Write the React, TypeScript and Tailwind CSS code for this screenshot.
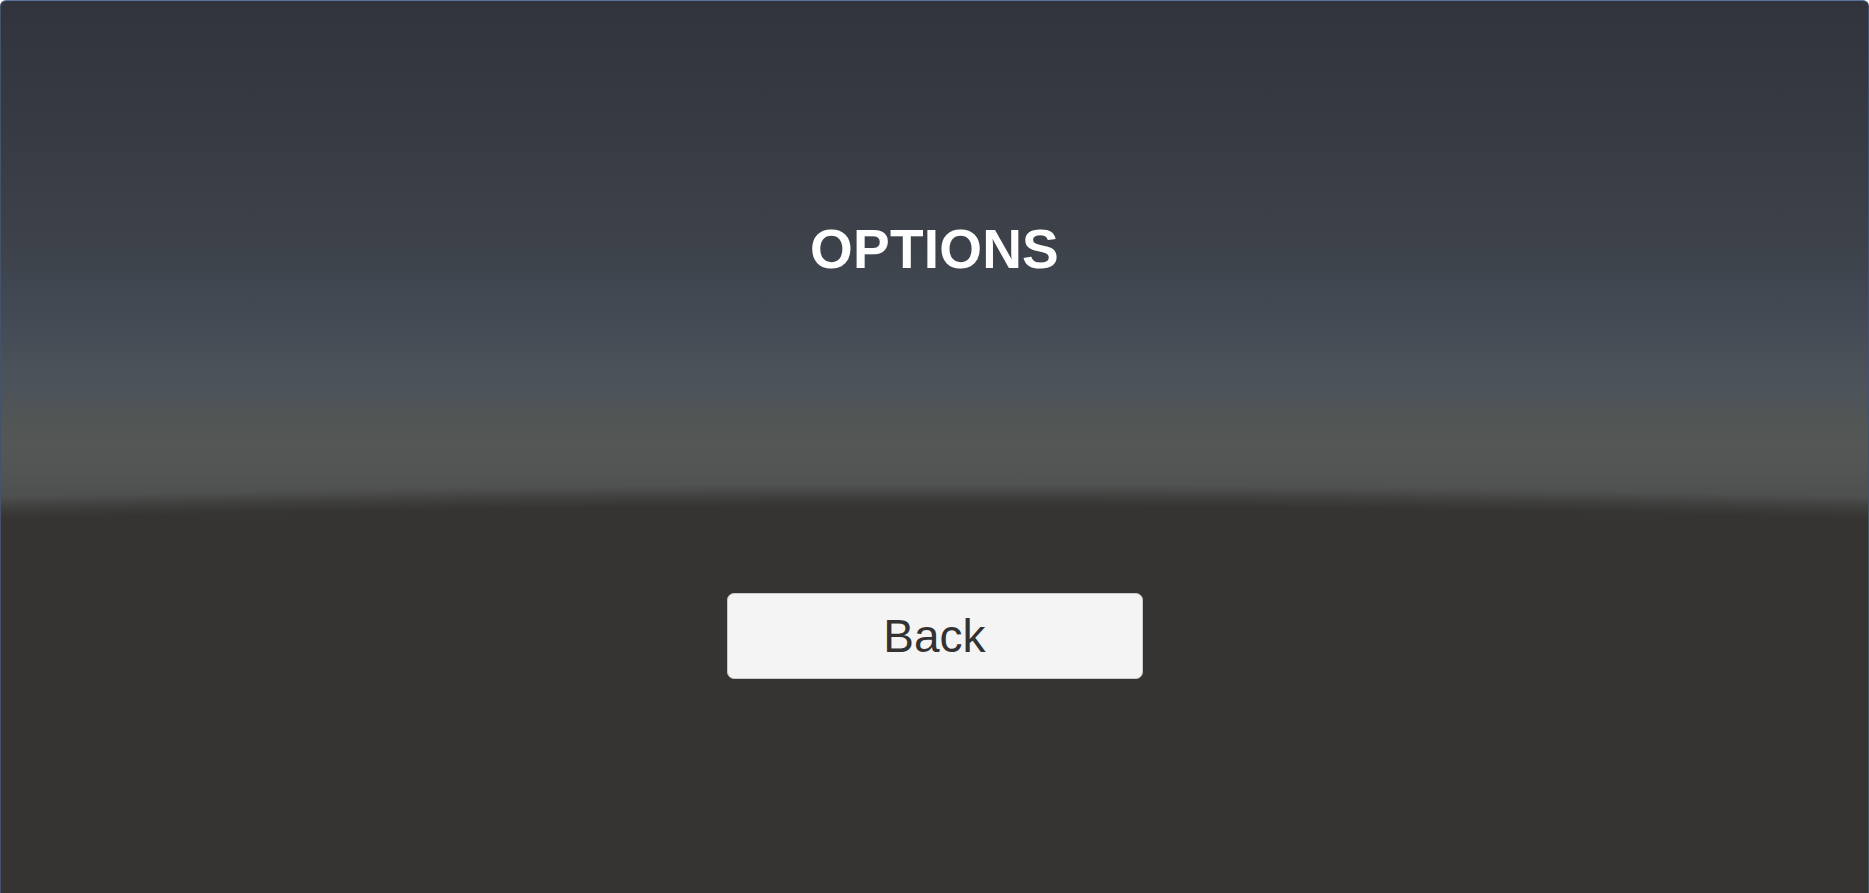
const OptionsMenu = () => {
    return (
        <main className="relative h-screen w-full overflow-hidden rounded-t-[6px] border-t border-x border-t-[#5873a0] border-x-[#44536b] bg-[linear-gradient(180deg,#31343c_0px,#363a43_120px,#3c414a_240px,#454c55_330px,#4c535a_385px,#515655_420px,#555756_445px,#535554_470px,#4e504f_495px,#464745_512px,#3a3937_528px,#353432_540px,#353432_100%)] font-['Liberation_Sans',Arial,sans-serif]">
            {/* curved ground plane */}
            <div className="pointer-events-none absolute inset-0 bg-[radial-gradient(5200px_800px_at_50%_1283px,#353432_97.2%,rgba(53,52,50,0)_100%)]" />
            <div className="relative flex flex-col items-center pt-[221px]">
                <h1 className="text-[55px] leading-none font-bold text-white tracking-[0.2px]">OPTIONS</h1>
                <button className="mt-[316px] flex h-[86px] w-[416px] items-center justify-center rounded-[7px] border border-[#c9c9c9] bg-[#f4f4f4] text-[46px] leading-none text-[#323232]">
                    Back
                </button>
            </div>
        </main>
    );
};

export default function App() {
    return <OptionsMenu />;
}
